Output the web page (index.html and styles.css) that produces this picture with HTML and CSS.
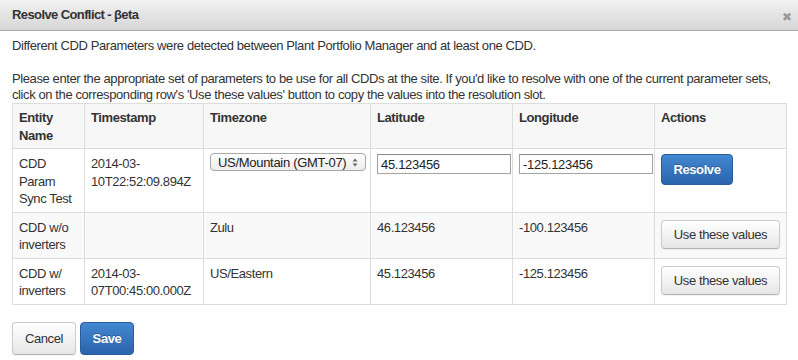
FILE: index.html
```html
<!DOCTYPE html>
<html lang="en">
<head>
  <meta charset="UTF-8" />
  <title>Resolve Conflict</title>
  <link rel="stylesheet" href="styles.css">
</head>
<body>
  <div class="dialog">
    <div class="title-bar">
      <span class="title">Resolve Conflict - βeta</span>
      <span class="close">✖</span>
    </div>

    <div class="content">
      <p class="intro">Different CDD Parameters were detected between Plant Portfolio Manager and at least one CDD.</p>
      <p class="intro">Please enter the appropriate set of parameters to be use for all CDDs at the site. If you'd like to resolve with one of the current parameter sets, click on the corresponding row's 'Use these values' button to copy the values into the resolution slot.</p>

      <table class="grid">
        <colgroup>
          <col class="c-name">
          <col class="c-time">
          <col class="c-zone">
          <col class="c-lat">
          <col class="c-lng">
          <col class="c-act">
        </colgroup>
        <thead>
          <tr>
            <th>Entity Name</th>
            <th>Timestamp</th>
            <th>Timezone</th>
            <th>Latitude</th>
            <th>Longitude</th>
            <th>Actions</th>
          </tr>
        </thead>
        <tbody>
          <tr class="row-tall">
            <td>CDD Param Sync Test</td>
            <td>2014-03-<br>10T22:52:09.894Z</td>
            <td class="ctrl">
              <div class="select-wrap">
                <select class="tz-select">
                  <option>US/Mountain (GMT-07)</option>
                </select>
                <svg class="arrows" width="6" height="9" viewBox="0 0 6 9"><path d="M0.5 3.5 L3 0.5 L5.5 3.5 Z M0.5 5.5 L3 8.5 L5.5 5.5 Z" fill="#666"/></svg>
              </div>
            </td>
            <td class="ctrl"><input class="field" type="text" value="45.123456"></td>
            <td class="ctrl"><input class="field" type="text" value="-125.123456"></td>
            <td class="ctrl"><button class="btn btn-primary btn-resolve">Resolve</button></td>
          </tr>
          <tr class="striped">
            <td>CDD w/o inverters</td>
            <td></td>
            <td>Zulu</td>
            <td>46.123456</td>
            <td>-100.123456</td>
            <td><button class="btn btn-default">Use these values</button></td>
          </tr>
          <tr>
            <td>CDD w/ inverters</td>
            <td>2014-03-<br>07T00:45:00.000Z</td>
            <td>US/Eastern</td>
            <td>45.123456</td>
            <td>-125.123456</td>
            <td><button class="btn btn-default">Use these values</button></td>
          </tr>
        </tbody>
      </table>

      <div class="footer">
        <button class="btn btn-default btn-cancel">Cancel</button>
        <button class="btn btn-primary btn-save">Save</button>
      </div>
    </div>
  </div>
</body>
</html>
```

FILE: styles.css
```css
* {
  box-sizing: border-box;
}

body {
  margin: 0;
  font-family: 'Liberation Sans', Arial, sans-serif;
  font-size: 13px;
  letter-spacing: -0.4px;
  color: #333;
  background: #fff;
}

.dialog {
  width: 798px;
  height: 360px;
  background: #fff;
}

.title-bar {
  height: 31px;
  display: flex;
  align-items: center;
  justify-content: space-between;
  padding: 0 6px 0 12px;
  background: linear-gradient(#f2f2f2, #d6d6d6);
  border-bottom: 1px solid #a8a8a8;
}

.title {
  font-weight: bold;
  color: #333;
  font-size: 13px;
  letter-spacing: -0.6px;
  padding-bottom: 1px;
}

.close {
  color: #9a9a9a;
  font-size: 12px;
  padding-top: 3px;
}

.content {
  padding: 6px 12px 0 12px;
}

.intro {
  margin: 0 0 17px 0;
  line-height: 17px;
  width: 780px;
}

.intro:last-of-type {
  margin-bottom: 0;
  line-height: 16px;
}

.grid {
  width: 774px;
  table-layout: fixed;
  border-collapse: collapse;
  border: 1px solid #ddd;
}

.c-name { width: 72px; }
.c-time { width: 119px; }
.c-zone { width: 167px; }
.c-lat { width: 142px; }
.c-lng { width: 142px; }
.c-act { width: 132px; }

.grid th,
.grid td {
  border: 1px solid #ddd;
  text-align: left;
  vertical-align: top;
  padding: 5px 6px 4px 6px;
  line-height: 17.5px;
}

.grid th {
  background: #f7f7f7;
  font-weight: bold;
  height: 44px;
}

.grid td {
  height: 44px;
  padding-top: 6px;
}

.grid tr.row-tall td {
  height: 61px;
}

.grid tr.row-tall td.ctrl {
  padding-top: 4px;
}

.grid tr.striped td {
  background: #f9f9f9;
}

.select-wrap {
  position: relative;
  width: 156px;
}

.tz-select {
  appearance: none;
  -webkit-appearance: none;
  display: block;
  width: 156px;
  height: 18px;
  padding: 0 0 0 7px;
  font-family: 'Liberation Sans', Arial, sans-serif;
  font-size: 13px;
  letter-spacing: -0.3px;
  color: #222;
  border: 1px solid #a9a9a9;
  border-radius: 4px;
  background: linear-gradient(#ffffff, #ececec);
}

.arrows {
  position: absolute;
  right: 8px;
  top: 5px;
}

.field {
  display: block;
  width: 134px;
  height: 20px;
  margin-top: 1px;
  padding: 0 3px;
  font-family: 'Liberation Sans', Arial, sans-serif;
  font-size: 13px;
  letter-spacing: -0.3px;
  color: #222;
  border: 1px solid #a3a3a3;
  border-top-color: #8c8c8c;
  background: #fff;
}

.btn {
  font-family: 'Liberation Sans', Arial, sans-serif;
  font-size: 13px;
  letter-spacing: -0.4px;
  border-radius: 4px;
  cursor: pointer;
  padding: 0 8px;
  white-space: nowrap;
}

.btn-primary {
  color: #fff;
  font-weight: bold;
  background: linear-gradient(#4388d0, #2a64ad);
  border: 1px solid #2a5d9f;
  text-shadow: 0 -1px 0 rgba(0, 0, 0, 0.25);
}

.btn-default {
  color: #333;
  background: linear-gradient(#ffffff, #e6e6e6);
  border: 1px solid #ccc;
  border-bottom-color: #b3b3b3;
  box-shadow: 0 1px 2px rgba(0, 0, 0, 0.06);
}

.btn-resolve {
  display: block;
  width: 72px;
  height: 31px;
  margin-top: 1px;
}

.grid .btn-default {
  display: block;
  width: 119px;
  height: 29px;
  margin-top: 1px;
}

.footer {
  display: flex;
  gap: 4px;
  margin-top: 17px;
}

.btn-cancel {
  width: 64px;
  height: 33px;
}

.btn-save {
  width: 54px;
  height: 33px;
}
```
